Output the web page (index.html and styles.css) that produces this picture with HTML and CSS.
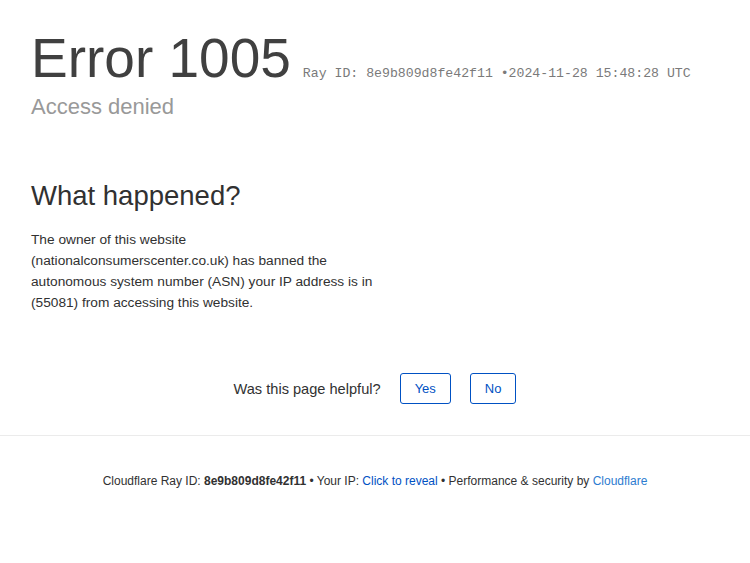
FILE: index.html
```html
<!DOCTYPE html>
<html lang="en">

<head>
    <meta charset="UTF-8">
    <meta name="viewport" content="width=device-width, initial-scale=1.0">
    <title>Access denied | nationalconsumerscenter.co.uk used Cloudflare to restrict access</title>

    <link rel="stylesheet" href="styles.css">
</head>

<body>

    <main class="wrapper">
        <header class="error-header">
            <h1>
                <span class="error-code">Error 1005</span>
                <small class="ray-info">Ray ID: 8e9b809d8fe42f11 &bull;2024-11-28 15:48:28 UTC</small>
            </h1>
            <h2 class="subheadline">Access denied</h2>
        </header>

        <section class="overview">
            <h2>What happened?</h2>
            <p>The owner of this website (nationalconsumerscenter.co.uk) has banned the autonomous system number (ASN) your IP address is in (55081) from accessing this website.</p>
        </section>

        <div class="feedback">
            <span class="feedback-text">Was this page helpful?</span>
            <button class="feedback-btn">Yes</button>
            <button class="feedback-btn">No</button>
        </div>
    </main>

    <footer class="footer">
        <p>
            Cloudflare Ray ID: <strong>8e9b809d8fe42f11</strong>
            <span class="sep">&bull;</span>
            Your IP: <a href="#" class="reveal">Click to reveal</a>
            <span class="sep">&bull;</span>
            Performance &amp; security by <a href="#" class="cf-link">Cloudflare</a>
        </p>
    </footer>

</body>

</html>
```

FILE: styles.css
```css
* {
    box-sizing: border-box;
    padding: 0;
    margin: 0;
}

body {
    background: #fff;
    color: #404040;
    font-family: 'Liberation Sans', Arial, sans-serif;
    font-size: 15px;
}

a {
    text-decoration: none;
}

/* Header */
.wrapper {
    padding: 0 31px;
}

.error-header {
    padding-top: 26px;
}

.error-header h1 {
    display: flex;
    align-items: baseline;
    font-weight: normal;
    color: #404040;
}

.error-code {
    font-size: 55px;
    line-height: 64px;
    margin-right: 12px;
}

.ray-info {
    font-family: 'Liberation Mono', 'Courier New', monospace;
    font-size: 13.2px;
    color: #7a7a7a;
    white-space: nowrap;
}

.subheadline {
    font-size: 22px;
    font-weight: normal;
    color: #999;
    line-height: 30px;
    margin-top: 2px;
}

/* Overview */
.overview {
    margin-top: 56px;
    width: 345px;
}

.overview h2 {
    font-size: 27.5px;
    font-weight: normal;
    color: #313131;
    line-height: 36px;
    margin-bottom: 15px;
}

.overview p {
    font-size: 13.7px;
    line-height: 21px;
    color: #313131;
}

/* Feedback */
.feedback {
    display: flex;
    justify-content: center;
    align-items: center;
    gap: 19px;
    margin-top: 60px;
    padding-bottom: 31px;
    border-bottom: 1px solid #ebebeb;
    margin-left: -31px;
    margin-right: -31px;
}

.feedback-text {
    font-size: 14.6px;
    color: #313131;
}

.feedback-btn {
    background: #fff;
    border: 1px solid #0051c3;
    border-radius: 3px;
    color: #0051c3;
    font-family: 'Liberation Sans', Arial, sans-serif;
    font-size: 13px;
    height: 31px;
    padding: 0 14px;
    cursor: pointer;
}

/* Footer */
.footer {
    text-align: center;
    font-size: 12px;
    color: #313131;
    padding-top: 38px;
}

.footer strong {
    font-weight: bold;
}

.reveal {
    color: #0051c3;
}

.cf-link {
    color: #2c7cd0;
}
```
